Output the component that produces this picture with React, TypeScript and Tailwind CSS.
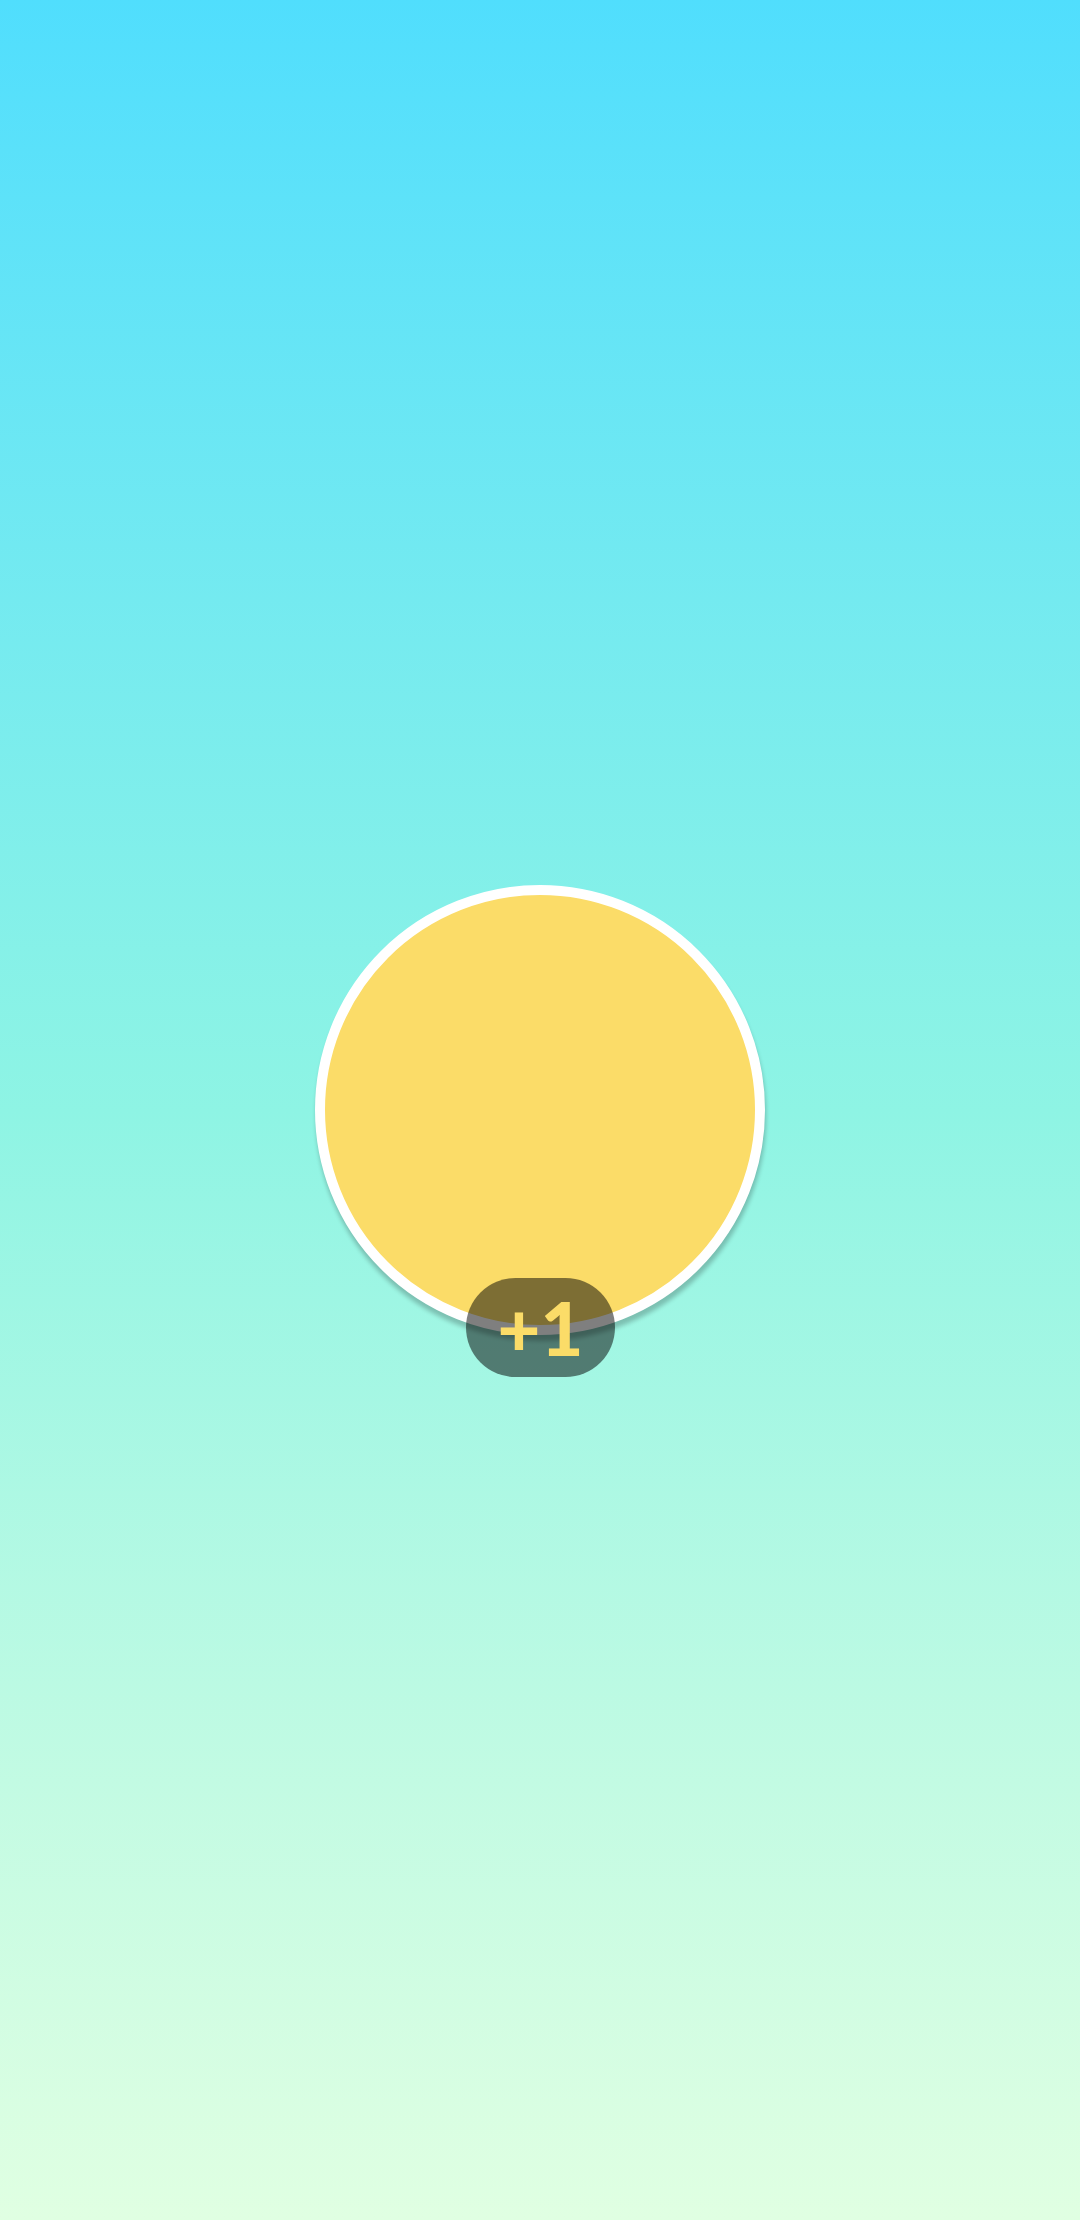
export default function App() {
    return (
        <div className="flex h-[2220px] w-full items-center justify-center bg-gradient-to-b from-[#50defd] via-[#8ef4e4] to-[#e0ffe2]">
            <div className="relative h-[450px] w-[450px]">
                <div className="h-full w-full rounded-full border-[10px] border-white bg-[#fbdc68] shadow-[1px_6px_4px_rgba(0,0,0,0.22)]" />
                <div className="absolute left-[151px] top-[393px] flex h-[99px] w-[149px] items-center justify-center rounded-full bg-[rgba(0,0,0,0.5)]">
                    <span className="font-['Lato',sans-serif] text-[74px] leading-none font-black text-[#fbdc68]">+1</span>
                </div>
            </div>
        </div>
    )
}
